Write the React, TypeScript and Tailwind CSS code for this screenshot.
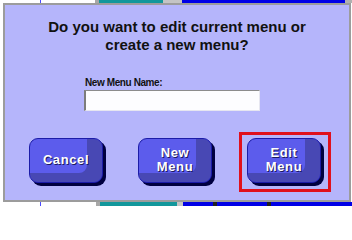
const font = { fontFamily: '"Liberation Sans", Arial, sans-serif' }

const MenuButton = ({lines}: { lines: string[] }) => {
  return (
    <div
      className="w-[74px] h-[45px] rounded-[9px] border border-[#1c1ca8] bg-[#5c5cec] shadow-[inset_-15px_-9px_0_#4848b4,3px_3px_0_#000040] flex flex-col items-center justify-center pb-[2px]">
      {lines.map((l) => (
        <span key={l}
              className="text-white font-bold text-[13px] leading-[14px] tracking-[0.6px] [text-shadow:1px_1px_0_#1a1a60]">
          {l}
        </span>
      ))}
    </div>
  )
}

export default function App() {
  return (
    <main className="w-[352px] h-[206px] bg-white overflow-hidden flex flex-col" style={font}>
      {/* desktop behind the dialog, top edge */}
      <div className="h-[3px] flex">
        <div className="w-[40px] bg-white"/>
        <div className="w-[1px] bg-[#4a4aff]"/>
        <div className="w-[54px] bg-white"/>
        <div className="w-[4px] bg-[#a8a8a8]"/>
        <div className="w-[64px] bg-[#12979b]"/>
        <div className="w-[19px] bg-[#c4c4c4]"/>
        <div className="w-[163px] bg-[#0000e6]"/>
        <div className="flex-1 bg-[#b0b0b0]"/>
      </div>

      <div className="ml-[3px] w-[348px] h-[199px] border-2 border-[#9c9c9c] bg-[#b5b5fb] flex flex-col">
        <div className="pt-[13px] text-center text-[15px] leading-[18px] font-bold text-[#111]">
          Do you want to edit current menu or
          <br/>
          create a new menu?
        </div>

        <div className="ml-[80px] mt-[23px] text-[10px] leading-[12px] font-bold tracking-[-0.4px] text-[#111]">
          New Menu Name:
        </div>
        <div
          className="ml-[79px] mt-[1px] w-[176px] h-[21px] bg-[#fdfdff] border-l-2 border-t border-l-[#7c7c7c] border-t-[#8c8c8c] border-r border-b border-r-[#e6e6f0] border-b-[#e6e6f0]"/>

        <div className="mt-[21px] pl-[24px] flex items-start">
          <div className="mt-[6px]">
            <MenuButton lines={["Cancel"]}/>
          </div>
          <div className="mt-[6px] ml-[35px]">
            <MenuButton lines={["New", "Menu"]}/>
          </div>
          <div className="ml-[27px] border-[3px] border-[#e0101c] pl-[5px] pt-[3px] pr-[7px] pb-[6px]">
            <MenuButton lines={["Edit", "Menu"]}/>
          </div>
        </div>
      </div>

      {/* desktop behind the dialog, bottom edge */}
      <div className="flex-1 flex">
        <div className="w-[40px] bg-white"/>
        <div className="w-[1px] bg-[#4a4aff]"/>
        <div className="w-[55px] bg-white"/>
        <div className="w-[4px] bg-[#a8a8a8]"/>
        <div className="w-[77px] bg-[#12979b]"/>
        <div className="w-[6px] bg-[#c4c4c4]"/>
        <div className="w-[30px] bg-[#0000e6]"/>
        <div className="w-[4px] bg-[#202020]"/>
        <div className="w-[50px] bg-[#0000e6]"/>
        <div className="w-[4px] bg-[#202020]"/>
        <div className="flex-1 bg-[#0000e6]"/>
      </div>
    </main>
  )
}
